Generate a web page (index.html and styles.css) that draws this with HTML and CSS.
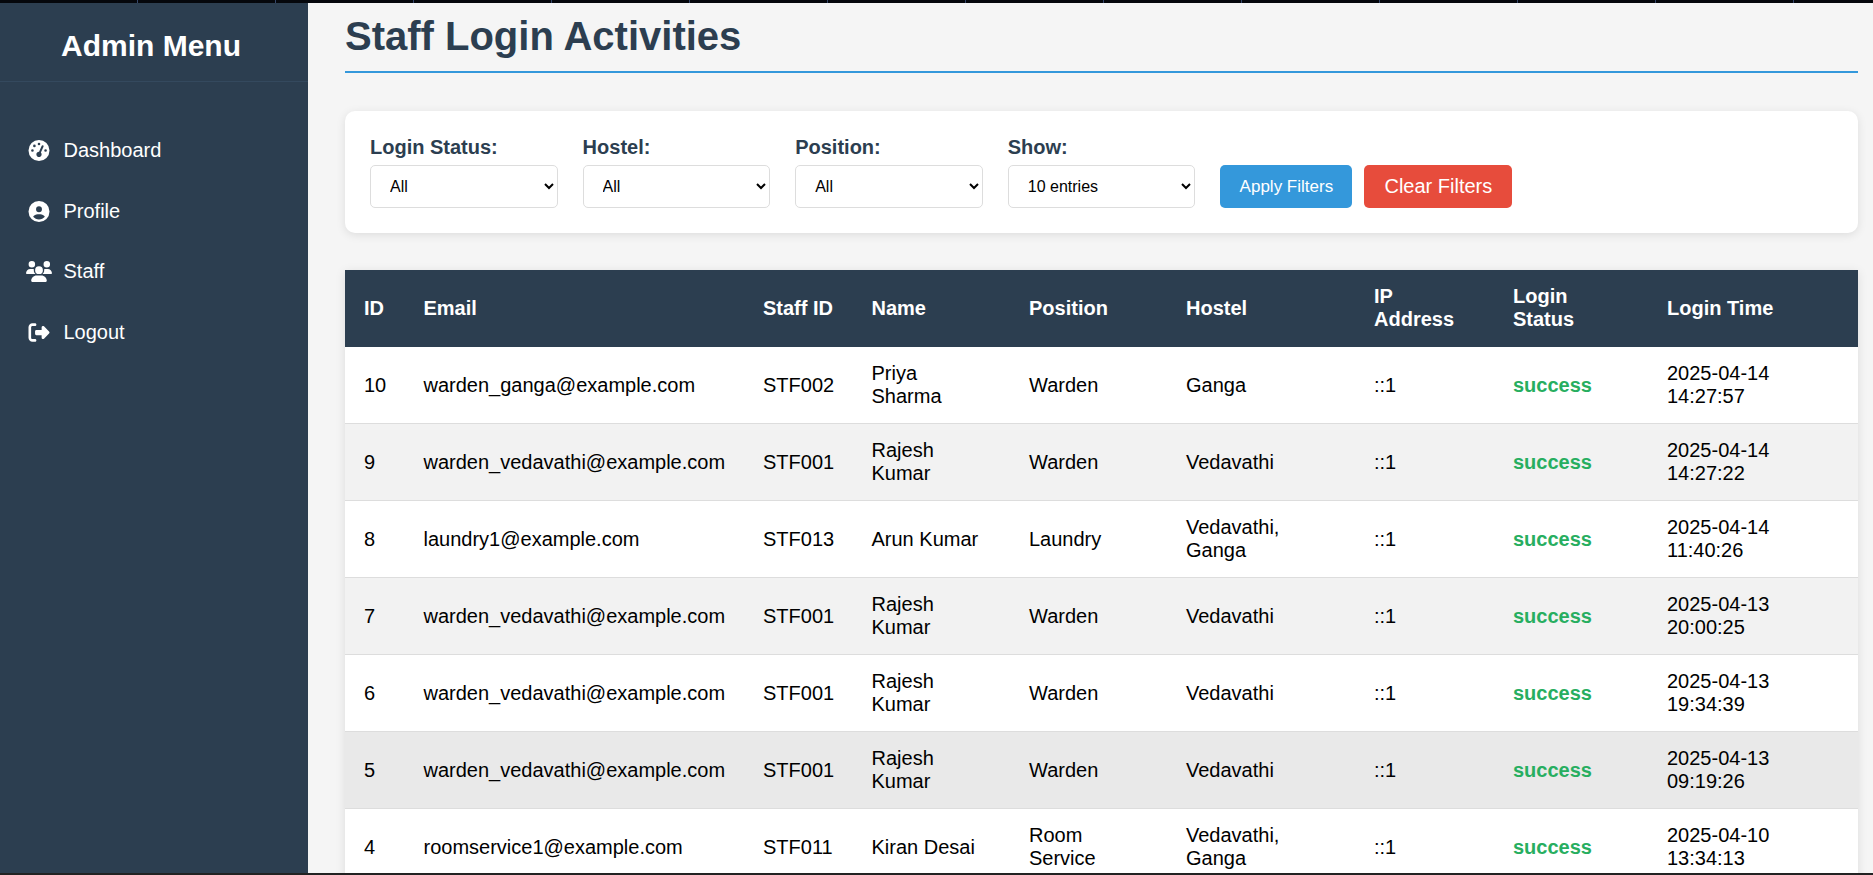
FILE: index.html
```html
<!DOCTYPE html>
<html lang="en">
<head>
    <meta charset="UTF-8">
    <meta name="viewport" content="width=device-width, initial-scale=1.0">
    <title>Staff Login Activities</title>
    <link rel="stylesheet" href="styles.css">
</head>
<body>
    <div class="topstrip"></div>
    <div class="app">
        <div class="sidebar">
            <div class="brand"><h2>Admin Menu</h2></div>
            <ul class="menu">
                <li>
                    <svg class="ico" viewBox="0 0 512 512"><path d="M0 256a256 256 0 1 1 512 0A256 256 0 1 1 0 256zM288 96a32 32 0 1 0 -64 0 32 32 0 1 0 64 0zM256 416c35.3 0 64-28.7 64-64c0-17.4-6.9-33.1-18.1-44.6L366 161.7c5.3-12.1-.2-26.3-12.3-31.6s-26.3 .2-31.6 12.3L257.9 288c-.6 0-1.3 0-1.9 0c-35.3 0-64 28.7-64 64s28.7 64 64 64zM176 144a32 32 0 1 0 -64 0 32 32 0 1 0 64 0zM96 288a32 32 0 1 0 0-64 32 32 0 1 0 0 64zm352-32a32 32 0 1 0 -64 0 32 32 0 1 0 64 0z"/></svg>
                    <span>Dashboard</span>
                </li>
                <li>
                    <svg class="ico" viewBox="0 0 512 512"><path d="M399 384.2C376.9 345.8 335.4 320 288 320H224c-47.4 0-88.9 25.8-111 64.2c35.2 39.2 86.2 63.8 143 63.8s107.8-24.7 143-63.8zM0 256a256 256 0 1 1 512 0A256 256 0 1 1 0 256zm256 16a72 72 0 1 0 0-144 72 72 0 1 0 0 144z"/></svg>
                    <span>Profile</span>
                </li>
                <li>
                    <svg class="ico" viewBox="0 0 640 512"><path d="M144 0a80 80 0 1 1 0 160A80 80 0 1 1 144 0zM512 0a80 80 0 1 1 0 160A80 80 0 1 1 512 0zM0 298.7C0 239.8 47.8 192 106.7 192h42.7c15.9 0 31 3.5 44.6 9.7c-1.3 7.2-1.9 14.7-1.9 22.3c0 38.2 16.8 72.5 43.3 96c-.2 0-.4 0-.7 0H21.3C9.6 320 0 310.4 0 298.7zM405.3 320c-.2 0-.4 0-.7 0c26.6-23.5 43.3-57.8 43.3-96c0-7.6-.7-15-1.9-22.3c13.6-6.3 28.7-9.7 44.6-9.7h42.7C592.2 192 640 239.8 640 298.7c0 11.8-9.6 21.3-21.3 21.3H405.3zM224 224a96 96 0 1 1 192 0 96 96 0 1 1 -192 0zM128 485.3C128 411.7 187.7 352 261.3 352H378.7C452.3 352 512 411.7 512 485.3c0 14.7-11.9 26.7-26.7 26.7H154.7c-14.7 0-26.7-11.9-26.7-26.7z"/></svg>
                    <span>Staff</span>
                </li>
                <li>
                    <svg class="ico" viewBox="0 0 512 512"><path d="M377.9 105.9L500.7 228.7c7.2 7.2 11.3 17.1 11.3 27.3s-4.1 20.1-11.3 27.3L377.9 406.1c-6.4 6.4-15 9.9-24 9.9c-18.7 0-33.9-15.2-33.9-33.9l0-62.1-128 0c-17.7 0-32-14.3-32-32l0-64c0-17.7 14.3-32 32-32l128 0 0-62.1c0-18.7 15.2-33.9 33.9-33.9c9 0 17.6 3.6 24 9.9zM160 96L96 96c-17.7 0-32 14.3-32 32l0 256c0 17.7 14.3 32 32 32l64 0c17.7 0 32 14.3 32 32s-14.3 32-32 32l-64 0c-53 0-96-43-96-96L0 128C0 75 43 32 96 32l64 0c17.7 0 32 14.3 32 32s-14.3 32-32 32z"/></svg>
                    <span>Logout</span>
                </li>
            </ul>
        </div>
        <div class="main">
            <h1>Staff Login Activities</h1>
            <div class="filters">
                <div class="field">
                    <label>Login Status:</label>
                    <select><option>All</option></select>
                </div>
                <div class="field">
                    <label>Hostel:</label>
                    <select><option>All</option></select>
                </div>
                <div class="field">
                    <label>Position:</label>
                    <select><option>All</option></select>
                </div>
                <div class="field">
                    <label>Show:</label>
                    <select><option>10 entries</option></select>
                </div>
                <button class="btn btn-apply">Apply Filters</button>
                <button class="btn btn-clear">Clear Filters</button>
            </div>
            <table class="logins">
                <colgroup>
                    <col class="c-id"><col class="c-email"><col class="c-staff"><col class="c-name"><col class="c-pos">
                    <col class="c-hostel"><col class="c-ip"><col class="c-status"><col class="c-time">
                </colgroup>
                <thead>
                    <tr>
                        <th>ID</th><th>Email</th><th>Staff ID</th><th>Name</th><th>Position</th>
                        <th>Hostel</th><th>IP<br>Address</th><th>Login<br>Status</th><th>Login Time</th>
                    </tr>
                </thead>
                <tbody>
                    <tr>
                        <td>10</td><td>warden_ganga@example.com</td><td>STF002</td><td>Priya<br>Sharma</td><td>Warden</td>
                        <td>Ganga</td><td>::1</td><td class="ok">success</td><td>2025-04-14<br>14:27:57</td>
                    </tr>
                    <tr>
                        <td>9</td><td>warden_vedavathi@example.com</td><td>STF001</td><td>Rajesh<br>Kumar</td><td>Warden</td>
                        <td>Vedavathi</td><td>::1</td><td class="ok">success</td><td>2025-04-14<br>14:27:22</td>
                    </tr>
                    <tr>
                        <td>8</td><td>laundry1@example.com</td><td>STF013</td><td>Arun Kumar</td><td>Laundry</td>
                        <td>Vedavathi,<br>Ganga</td><td>::1</td><td class="ok">success</td><td>2025-04-14<br>11:40:26</td>
                    </tr>
                    <tr>
                        <td>7</td><td>warden_vedavathi@example.com</td><td>STF001</td><td>Rajesh<br>Kumar</td><td>Warden</td>
                        <td>Vedavathi</td><td>::1</td><td class="ok">success</td><td>2025-04-13<br>20:00:25</td>
                    </tr>
                    <tr>
                        <td>6</td><td>warden_vedavathi@example.com</td><td>STF001</td><td>Rajesh<br>Kumar</td><td>Warden</td>
                        <td>Vedavathi</td><td>::1</td><td class="ok">success</td><td>2025-04-13<br>19:34:39</td>
                    </tr>
                    <tr class="hover">
                        <td>5</td><td>warden_vedavathi@example.com</td><td>STF001</td><td>Rajesh<br>Kumar</td><td>Warden</td>
                        <td>Vedavathi</td><td>::1</td><td class="ok">success</td><td>2025-04-13<br>09:19:26</td>
                    </tr>
                    <tr>
                        <td>4</td><td>roomservice1@example.com</td><td>STF011</td><td>Kiran Desai</td><td>Room<br>Service</td>
                        <td>Vedavathi,<br>Ganga</td><td>::1</td><td class="ok">success</td><td>2025-04-10<br>13:34:13</td>
                    </tr>
                </tbody>
            </table>
        </div>
    </div>
    <div class="bottomstrip"></div>
</body>
</html>
```
FILE: styles.css
```css
*{
    padding:0;
    margin:0;
    box-sizing:border-box;
    list-style:none;
}
html,body{
    height:100%;
    overflow:hidden;
}
body{
    display:flex;
    flex-direction:column;
    font-family:"Liberation Sans", Arial, sans-serif;
    background-color:#f5f5f5;
    color:#000;
}
.topstrip{
    height:3px;
    flex:none;
    background-color:#05070c;
    background-image:repeating-linear-gradient(90deg, transparent 0 137px, #34466a 137px 138px);
}
.bottomstrip{
    height:2px;
    flex:none;
    background-color:#222;
}
.app{
    flex:1;
    display:flex;
    min-height:0;
}

/* sidebar */
.sidebar{
    width:308px;
    flex:none;
    background-color:#2c3e50;
    color:#fff;
}
.brand{
    height:79px;
    padding:26px 6px 0 0;
    text-align:center;
    border-bottom:1px solid #34495e;
}
.brand h2{
    font-size:30px;
    line-height:33px;
    font-weight:bold;
}
.menu{
    padding-top:38px;
}
.menu li{
    display:flex;
    align-items:center;
    height:60.7px;
    padding-left:26px;
    font-size:20px;
}
.ico{
    width:26px;
    height:21px;
    margin-right:11.5px;
    fill:#fff;
    flex:none;
}

/* main */
.main{
    flex:1;
    min-width:0;
    padding:0 15px 0 37px;
    overflow:hidden;
}
h1{
    height:70px;
    padding-top:10px;
    font-size:40px;
    line-height:46px;
    font-weight:bold;
    color:#2c3e50;
    border-bottom:2px solid #3498db;
}
.filters{
    display:flex;
    align-items:flex-end;
    gap:25px;
    height:122px;
    margin-top:38px;
    padding:25px;
    background-color:#fff;
    border-radius:10px;
    box-shadow:0 2px 10px rgba(0,0,0,0.1);
}
.field{
    width:187.6px;
}
.field label{
    display:block;
    margin-bottom:7px;
    font-size:20px;
    line-height:22px;
    font-weight:bold;
    color:#2c3e50;
}
.field select{
    display:block;
    width:100%;
    height:43px;
    padding:0 15px;
    font-family:inherit;
    font-size:16px;
    color:#000;
    background-color:#fff;
    border:1px solid #ddd;
    border-radius:5px;
}
.btn{
    height:43px;
    color:#fff;
    font-family:inherit;
    border:0;
    border-radius:5px;
    cursor:pointer;
}
.btn-apply{
    width:132px;
    font-size:17px;
    background-color:#3498db;
}
.btn-clear{
    width:148px;
    margin-left:-13px;
    font-size:20px;
    background-color:#e74c3c;
}

/* table */
.logins{
    width:100%;
    margin-top:37px;
    table-layout:fixed;
    border-collapse:collapse;
    background-color:#fff;
    box-shadow:0 2px 10px rgba(0,0,0,0.1);
}
.c-id{width:59.5px;}
.c-email{width:339.5px;}
.c-staff{width:108.5px;}
.c-name{width:157.5px;}
.c-pos{width:157px;}
.c-hostel{width:188px;}
.c-ip{width:139px;}
.c-status{width:154px;}
.c-time{width:210px;}
.logins th,.logins td{
    padding:15px 19px;
    font-size:20px;
    line-height:23px;
    text-align:left;
}
.logins th{
    padding-bottom:16px;
    font-weight:bold;
    color:#fff;
    background-color:#2c3e50;
}
.logins td{
    border-bottom:1px solid #ddd;
}
.logins tbody tr:nth-child(even){
    background-color:#f2f2f2;
}
.logins tbody tr.hover{
    background-color:#e9e9e9;
}
.logins td.ok{
    font-weight:bold;
    color:#27ae60;
}
```
